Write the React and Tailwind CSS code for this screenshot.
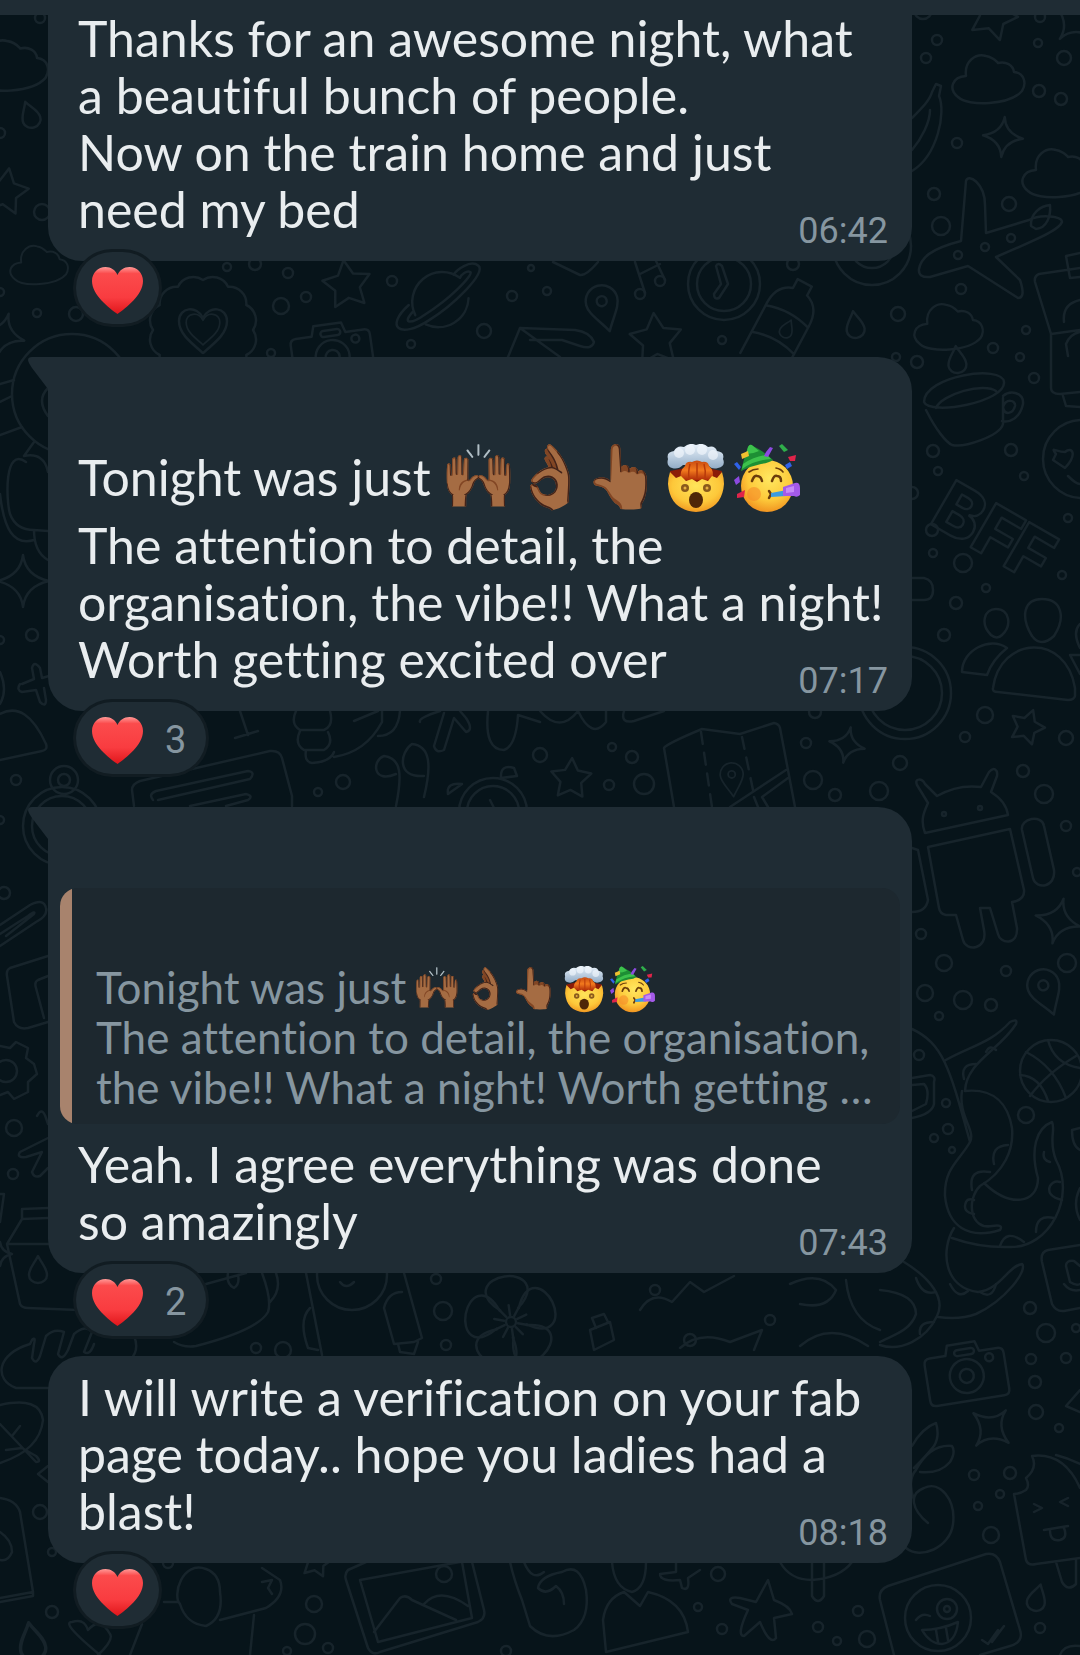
import React from "react";

const TEXT = "font-['Lato',sans-serif] [font-variant-ligatures:none]";
const DIGITS = "font-['Roboto',sans-serif]";

/* ---------- wallpaper ---------- */

const DOTS = [
  [40, 18, 6], [0, 133, 6], [42, 212, 9], [37, 313, 5], [76, 314, 8], [0, 292, 5],
  [227, 267, 5], [255, 264, 7], [288, 273, 6], [281, 306, 9], [306, 297, 6], [392, 281, 6],
  [484, 331, 8], [512, 296, 6], [531, 268, 4], [411, 344, 5], [271, 353, 5], [547, 291, 5],
  [722, 340, 5], [793, 264, 7], [898, 314, 8], [923, 10, 10], [937, 40, 6], [926, 58, 6],
  [1038, 43, 5], [1064, 58, 8], [1039, 91, 7], [1061, 99, 7], [1040, 17, 6], [957, 143, 6],
  [934, 194, 7], [941, 226, 10], [1009, 204, 8], [1011, 238, 5], [985, 247, 5], [958, 255, 5],
  [961, 289, 6], [1026, 330, 5], [896, 357, 5], [917, 362, 7], [993, 348, 6], [1020, 357, 5],
  [1034, 378, 6], [933, 451, 7], [938, 471, 5], [1011, 450, 7], [1024, 476, 5], [932, 530, 7],
  [933, 553, 5], [963, 563, 10], [986, 588, 5], [956, 603, 7], [944, 635, 7], [1068, 518, 5],
  [1062, 575, 5], [912, 493, 7], [985, 715, 9], [965, 737, 6], [1066, 738, 8], [900, 763, 8],
  [1023, 771, 7], [1044, 794, 10], [879, 791, 10], [813, 780, 10], [835, 795, 7], [806, 743, 6],
  [815, 712, 7], [1066, 826, 6], [1077, 872, 5], [921, 934, 6], [944, 963, 9], [1006, 971, 6],
  [1067, 963, 10], [925, 993, 9], [963, 1000, 10], [991, 1005, 7], [939, 1016, 5], [612, 747, 5],
  [632, 757, 7], [644, 784, 11], [609, 785, 6], [540, 755, 8], [16, 780, 6], [0, 820, 5],
  [318, 792, 5], [343, 782, 8], [32, 635, 7], [0, 640, 5], [4, 893, 7], [919, 1055, 6],
  [946, 1103, 5], [948, 1129, 6], [934, 1138, 5], [952, 1150, 4], [1026, 1115, 9], [14, 1128, 9],
  [13, 1174, 6], [436, 1279, 6], [443, 1311, 10], [446, 1345, 6], [256, 1348, 6], [283, 1350, 9],
  [1030, 1308, 7], [1046, 1333, 10], [1076, 1328, 5], [1031, 1359, 6], [1066, 1358, 6],
  [1035, 1382, 7], [1036, 1412, 8], [1059, 1428, 5], [974, 1475, 6], [1010, 1473, 7],
  [1000, 1494, 5], [978, 1506, 5], [991, 1535, 9], [40, 1512, 8], [52, 1552, 5], [52, 1612, 7],
  [1040, 1628, 6], [444, 1574, 9], [314, 1604, 9], [305, 1634, 11], [328, 1648, 6], [718, 1574, 8],
  [698, 1607, 5], [722, 1629, 6], [818, 1627, 6], [858, 1611, 6], [867, 1639, 9], [837, 1641, 5],
  [506, 1651, 6], [168, 1563, 6], [287, 1651, 5], [655, 1290, 6], [690, 1340, 7], [770, 1320, 6],
];

const STARS = [
  [5, 192, 24, 10], [347, 285, 25, -8], [656, 340, 27, -5], [993, 16, 25, 20],
  [571, 779, 21, 3], [1027, 727, 18, 20], [316, 1562, 16, 10],
];

const SPARKLES = [
  [3, 335, 22, 15], [1003, 137, 20, 5], [23, 581, 26, 0], [847, 745, 18, 12],
  [1058, 921, 23, 14], [991, 1428, 23, 40], [1074, 22, 22, 40], [0, 1254, 12, 0],
];

const DROPS = [
  [30, 115, 1, -20], [855, 325, 1, -8], [957, 360, 1, -5], [38, 1270, 1, 0], [1037, 1598, 1, 15],
  [787, 329, 0.7, 25], [32, 1642, 1.4, -10],
];

const PINS = [[603, 306, 1, -15], [1045, 990, 1, -20], [732, 778, 0.72, -5]];

const CLOUDS = [
  [952, 53, 1], [1022, 147, 1], [914, 302, 0.95], [10, 244, 0.8], [-28, 38, 1.05],
];

function starPath(r) {
  const pts = [];
  for (let i = 0; i < 10; i++) {
    const a = (Math.PI / 5) * i - Math.PI / 2;
    const q = i % 2 ? r * 0.52 : r;
    pts.push(`${(q * Math.cos(a)).toFixed(1)},${(q * Math.sin(a)).toFixed(1)}`);
  }
  return `M${pts.join("L")}Z`;
}

function scallopPath(r, n) {
  let d = "";
  for (let i = 0; i <= n; i++) {
    const a = (2 * Math.PI * i) / n;
    const p = `${(r * Math.cos(a)).toFixed(1)} ${(r * Math.sin(a)).toFixed(1)}`;
    d += i ? `A17 17 0 0 1 ${p}` : `M${p}`;
  }
  return d + "Z";
}

const HEART = "M0 24C-14 12-24 4-24-8C-24-22-6-24 0-11C6-24 24-22 24-8C24 4 14 12 0 24Z";

function Camera({ at }) {
  return (
    <g transform={at}>
      <path d="M-34-18L-18-18L-15-28H13L16-18H34Q40-18 40-12V24Q40 30 34 30H-34Q-40 30-40 24V-12Q-40-18-34-18Z" />
      <circle cy="5" r="17" />
      <circle cy="5" r="7" />
      <rect x="-9" y="-22" width="20" height="6" rx="3" />
      <circle cx="25" cy="-10" r="4" />
    </g>
  );
}

function Wallpaper() {
  return (
    <svg
      aria-hidden="true"
      className="absolute inset-0 h-full w-full"
      viewBox="0 0 1080 1655"
      preserveAspectRatio="xMidYMin slice"
      fill="none"
      stroke="#17242b"
      strokeWidth="2.5"
      strokeLinejoin="round"
      strokeLinecap="round"
    >
      {DOTS.map(([x, y, r], i) => <circle key={i} cx={x} cy={y} r={r - 1} />)}
      {STARS.map(([x, y, r, a], i) => <path key={i} d={starPath(r)} transform={`translate(${x} ${y}) rotate(${a})`} />)}
      {SPARKLES.map(([x, y, r, a], i) => (
        <path key={i} d="M0-10Q1-2 10 0Q1 2 0 10Q-1 2-10 0Q-1-2 0-10Z" strokeWidth={25 / r} transform={`translate(${x} ${y}) rotate(${a}) scale(${r / 10})`} />
      ))}
      {DROPS.map(([x, y, s, a], i) => (
        <path key={i} d="M0-14C4-6 9-2 9 5A9 8 0 0 1-9 5C-9-2-4-6 0-14Z" transform={`translate(${x} ${y}) rotate(${a}) scale(${s})`} />
      ))}
      {PINS.map(([x, y, s, a], i) => (
        <g key={i} transform={`translate(${x} ${y}) rotate(${a}) scale(${s})`}>
          <path d="M0 26C-8 12-16 4-16-5A16 16 0 0 1 16-5C16 4 8 12 0 26Z" />
          <circle cy="-5" r="5" />
        </g>
      ))}
      {CLOUDS.map(([x, y, s], i) => (
        <path key={i} d="M14 23C12 8 24 0 34 3C41 4 44 8 46 10C54 8 61 12 62 19C72 20 75 30 70 38C58 52 16 54 6 44C-4 36 0 24 14 23Z" transform={`translate(${x} ${y}) scale(${s})`} />
      ))}

      {/* pepper, aeroplane, gift box */}
      <path d="M912 118C922 108 930 100 932 92L936 84L941 86L939 96C946 112 938 155 912 171M912 150C922 138 930 122 930 110" />
      <path d="M966 181C968 173 985 183 985 205L986 233L1029 220C1040 214 1062 216 1062 222C1060 228 1050 234 996 257L1020 280Q1026 298 1018 298L968 266L930 277Q918 278 919 269C921 258 930 249 961 241Z" />
      <path d="M1031 226C1030 214 1040 206 1050 205C1051 216 1047 228 1036 229Z" />
      <path d="M1080 268L1039 274Q1034 276 1035 282L1051 334V388Q1051 394 1060 394L1080 392M1080 253L1066 256L1070 278L1080 277M1051 334L1080 330M1064 322Q1062 304 1080 300M1068 356L1066 344Q1070 334 1080 332M1063 396L1066 406L1080 407" />

      {/* badge, planet, camera, envelope */}
      <path d={scallopPath(50, 12)} transform="translate(203 330)" />
      <path d={HEART} transform="translate(203 329)" />
      <path d={HEART} transform="translate(203 328) scale(.7)" />
      <g transform="translate(439 298) rotate(-28)">
        <path d="M-29 4A30 30 0 0 1 28-8M-24 17A30 30 0 0 0 26 14" />
        <path d="M-30-8C-62 0-54 18-20 15C10 13 54 0 50-10C46-20 28-16 24-14" />
        <path d="M-30 0C-46 6-36 10-20 8C10 6 40-4 40-8C38-12 30-10 28-8" />
      </g>
      <Camera at="translate(332 352) rotate(-8)" />
      <path d="M508 357L520 328L575 330Q590 332 594 342Q592 350 580 346L562 340H530M520 328L560 357M553 262L580 275Q586 276 598 262" />

      {/* notes, clocks, bottle, target */}
      <circle cx="640" cy="294" r="5" /><circle cx="660" cy="281" r="5" />
      <path d="M645 293L635 262M665 280L656 261M640 274L660 264" />
      <circle cx="724" cy="284" r="36" /><circle cx="724" cy="284" r="27" />
      <path d="M716 266Q718 262 722 266L728 284L719 298Q714 300 714 294L721 284Z" />
      <g transform="translate(785 320) rotate(28)">
        <path d="M-8-42V-32C-20-28-24-18-24-6V50M8-42V-32C20-28 24-18 24-6V50M-8-42H8M-24-4Q0-12 24-4M-24 26Q0 18 24 26" />
      </g>
      <circle cx="872" cy="246" r="39" /><circle cx="872" cy="246" r="22" />

      {/* cup and smiling face */}
      <path d="M924 402C924 376 1002 364 1004 382C1006 402 930 416 924 402ZM926 410C936 430 946 442 952 445C964 448 1000 436 1003 424L1003 398M936 408C942 394 984 382 996 391M1003 396C1010 390 1024 392 1023 404C1020 418 1010 423 1002 421M1003 407C1006 398 1016 400 1015 406C1013 414 1004 416 1003 407Z" />
      <circle cx="1082" cy="459" r="39" />
      <path d="M1056 454C1050 446 1056 452 1065 452C1072 446 1078 454 1065 468L1053 460ZM1068 476Q1076 484 1080 484" />
      <g transform="translate(934 503) rotate(30)" className="font-['Inter',sans-serif]" fontSize="70" fontWeight="800">
        <text x="4" y="20">B</text><text x="50" y="20">F</text><text x="88" y="20">F</text>
      </g>
      <path d="M912 578H924Q933 580 933 590Q933 600 924 600H912" />

      {/* people and ring */}
      <path d="M996 609C1010 609 1012 626 1002 635Q997 640 991 635C980 624 984 609 996 609ZM1042 599C1062 599 1066 618 1054 636Q1041 648 1032 636C1020 616 1024 599 1042 599ZM1007 648C990 636 962 650 962 672L987 675Q992 660 1007 648ZM993 688C1000 636 1066 632 1075 688V696Q1074 700 1068 700L998 692Q992 692 993 688ZM1080 624Q1072 632 1080 648M1080 655H1070L1080 674" />
      <circle cx="905" cy="693" r="46" /><circle cx="905" cy="693" r="37" />

      {/* android */}
      <path d="M925 833C920 820 924 812 928 803L917 785C914 778 922 778 925 784L937 796Q958 784 981 787L989 772C994 766 998 770 997 776L991 792C1004 800 1007 808 1008 815ZM928 847L1010 829L1024 890Q1025 900 1012 902L1017 928C1018 946 1000 944 998 934L990 908L980 908L984 930C988 950 966 952 963 940L956 915H946Q940 914 939 908ZM1022 830C1020 818 1042 814 1044 826L1054 870C1056 888 1036 890 1033 878ZM912 848L918 850L928 900Q926 912 912 912" />
      <circle cx="944" cy="814" r="2" /><circle cx="980" cy="808" r="2" />

      {/* map */}
      <path d="M674 807L664 748Q666 744 702 729L740 734L774 723Q779 724 780 728L795 807M786 770L730 807M788 778L762 797L768 807M754 797L758 807" />
      <path d="M701 732L712 807M742 737L753 790" strokeDasharray="12 9" />
      <path d="M540 711Q560 734 578 711M578 711Q592 740 606 722V711M624 711Q620 724 634 721L664 711" />

      {/* astronaut */}
      <circle cx="72" cy="394" r="60" />
      <path d="M48 388Q36 400 48 416M26 462C4 446 6 500 10 514Q16 530 34 530L48 531M34 442L24 456Q44 452 48 472M0 494C4 530 14 546 34 540M34 530Q34 552 48 560M0 384L14 380M0 435L22 427M0 402L12 396" />
      {/* plus, fan, stopwatch, card */}
      <path d="M20 684Q16 690 22 692L36 690L40 702Q46 708 46 700L44 688M22 684L34 679L32 668Q34 660 40 668L42 678L49 676M0 714Q26 700 46 744Q48 750 42 751L0 760M0 672Q8 690 0 704" />
      <circle cx="64" cy="780" r="14" /><circle cx="64" cy="780" r="6" />
      <circle cx="62" cy="826" r="39" /><circle cx="62" cy="826" r="30" />
      <path d="M134 806L132 790Q132 784 140 781L270 751Q280 750 282 758L292 796V806M153 800Q148 794 156 791L248 771Q256 772 250 779L158 800M190 806L246 794Q254 796 248 800L226 806" />
      <path d="M240 711L248 735M235 738L258 731M296 711Q290 724 300 730H324Q334 726 330 711M300 731Q294 744 304 750H324Q334 744 328 732M306 750Q304 762 312 763Q330 762 334 752M334 757Q366 752 382 722V711M354 721L378 711M378 736Q398 736 400 711" />
      <path d="M420 722Q418 718 440 711M444 713L434 746Q436 754 444 750L454 718L466 732Q474 730 466 718L460 711M488 711Q484 750 504 750Q516 746 518 715L540 722M396 774C372 784 372 760 384 756C402 758 402 776 396 806M424 776C396 778 400 752 412 744C430 746 432 764 424 797" />
      <circle cx="493" cy="812" r="34" /><circle cx="493" cy="812" r="26" />
      <path d="M448 794Q446 782 462 784ZM501 778Q500 764 514 768L517 776ZM490 800L496 812" />
      <path d="M0 925L30 905Q44 898 46 908Q48 916 36 922L0 946M0 934L28 916Q36 910 34 914L6 936M48 956L10 968Q6 970 7 976L14 1022Q18 1030 28 1028L48 1022M48 976L38 980Q34 982 36 988L44 1018" />

      {/* octopus, card, basketball */}
      <path d="M912 1029C944 1044 950 1070 970 1142C960 1160 944 1168 945 1196C948 1226 968 1240 1000 1230Q1004 1224 992 1226C970 1230 966 1200 980 1186C1004 1172 1014 1150 1012 1128C1008 1104 994 1088 965 1091C966 1062 1000 1050 1016 1024Q1018 1018 1010 1022C990 1044 970 1046 944 1061M970 1142C976 1130 958 1116 962 1091M984 1183C1010 1208 1038 1204 1038 1178C1030 1150 1036 1128 1052 1122C1056 1130 1048 1140 1056 1160C1076 1196 1050 1248 1010 1247Q980 1248 952 1238M954 1228C940 1250 944 1288 978 1292C1000 1290 1008 1266 1022 1264C1028 1270 1006 1300 976 1314Q960 1320 938 1317M904 1262C930 1278 946 1298 937 1316C926 1340 900 1352 880 1345M880 1290C900 1292 916 1298 916 1314C910 1332 890 1336 880 1342" />
      <path d="M964 1079Q960 1064 976 1064M986 1052Q990 1044 996 1050M994 1164Q990 1146 1008 1145M972 1190Q968 1168 990 1172M974 1214Q962 1212 966 1202Q968 1198 974 1200M1000 1246Q1006 1228 1024 1242M1036 1232Q1036 1214 1054 1218M1062 1200Q1046 1196 1050 1186Q1054 1180 1060 1182M1050 1162Q1042 1160 1044 1152M950 1284Q958 1300 968 1291M980 1292Q992 1300 996 1284M916 1278Q922 1296 936 1292M920 1334Q918 1322 934 1322M912 1078L930 1075Q936 1076 934 1082L934 1104Q932 1114 912 1118M912 1085L924 1084Q930 1090 926 1104L912 1111" />
      <circle cx="1051" cy="1071" r="31" />
      <path d="M1030 1096Q1046 1074 1076 1056M1026 1052Q1054 1066 1066 1098M1048 1040Q1054 1064 1080 1068M1020 1075Q1040 1076 1048 1101M1080 1128L1072 1130Q1072 1146 1080 1150M1080 1188Q1072 1204 1080 1220M1080 1245L1048 1250Q1040 1252 1042 1262L1052 1304Q1056 1312 1064 1311L1080 1308M1066 1266Q1066 1260 1074 1261L1080 1266M1066 1266L1070 1282Q1076 1286 1080 1284M1064 1284Q1070 1292 1080 1290" />
      <Camera at="translate(966 1371) rotate(-9)" />

      {/* gear, carton, bread, leaf, bag */}
      <path d="M0 1046L10 1048L16 1042L28 1048L26 1058L34 1064L37 1074L28 1082L28 1092L14 1099L8 1092L0 1095" /><circle cx="6" cy="1071" r="11" />
      <path d="M37 1116Q42 1106 46 1118L48 1124M48 1138L20 1152Q16 1158 26 1157L42 1152L32 1172Q34 1178 40 1176L48 1168M0 1194H4L0 1222M48 1208L22 1209V1219L7 1244L20 1304Q22 1308 28 1308L78 1310M22 1219L48 1218M7 1244H48" />
      <path d="M48 1388H16C-6 1380-4 1354 30 1344L32 1340Q36 1336 34 1344L32 1358Q36 1366 40 1356L46 1336Q54 1328 64 1332L58 1354Q62 1362 68 1350L74 1334Q86 1324 92 1332L84 1352Q90 1356 94 1344M134 1336Q140 1350 130 1360M0 1405Q40 1396 43 1420Q40 1450 0 1463M0 1424L36 1462Q42 1462 36 1456L22 1448M20 1426L12 1436M22 1448L6 1450M48 1466L38 1474L48 1482M0 1498Q16 1500 20 1512L33 1592L0 1598M33 1592V1596L0 1602M0 1532Q12 1540 12 1552Q8 1562 0 1560" />
      {/* paint tube, brushes, flower, fish */}
      <path d="M206 1284L246 1273M228 1273Q226 1284 234 1288Q240 1284 238 1275M262 1273Q272 1300 268 1312Q258 1330 196 1346Q184 1348 174 1342M276 1273Q282 1290 270 1302M306 1273L322 1355M310 1308Q298 1320 308 1348L318 1350" />
      <circle cx="352" cy="1275" r="35" /><path d="M340 1282Q346 1290 354 1282M404 1273L422 1338L414 1342L394 1344L384 1308Q388 1292 402 1292M398 1344L400 1352L414 1354L418 1342" />
      <g transform="translate(511 1322) rotate(-8)">
        {[0, 72, 144, 216, 288].map((a) => <path key={a} d="M-9-13C-32-32-18-46 0-46C18-46 32-32 9-13" transform={`rotate(${a})`} />)}
        <circle r="5" />
        {[0, 36, 72, 108, 144, 180, 216, 252, 288, 324].map((a) => <path key={a} d="M0-7V-17" transform={`rotate(${a})`} />)}
      </g>
      <path d="M590 1330L610 1322L614 1340L594 1350ZM596 1328L592 1318L604 1314L608 1322M640 1310Q652 1290 672 1302L690 1282L704 1292L734 1276M680 1348Q700 1330 730 1342L762 1330L754 1350M790 1284Q820 1270 836 1290Q828 1310 800 1304M846 1280Q850 1320 880 1330M800 1346Q830 1320 868 1346" />
      {/* apple and ice cream */}
      <path d="M912 1446Q922 1428 936 1423Q940 1436 934 1446Q926 1456 914 1468M916 1470Q930 1444 952 1446Q956 1452 950 1462Q940 1474 920 1472M914 1500C908 1484 912 1474 916 1470M928 1523C912 1510 908 1494 924 1488C940 1480 956 1500 953 1524C950 1548 920 1560 906 1548" />
      <path d="M1080 1488Q1064 1452 1032 1456Q1038 1468 1026 1478Q1030 1486 1026 1490Q1020 1494 1014 1494L1026 1560Q1028 1566 1036 1564L1080 1558M1056 1455Q1068 1458 1080 1464M1034 1504L1042 1508L1034 1512M1068 1498L1060 1502L1068 1506M1044 1530L1068 1526M1050 1530Q1050 1542 1060 1540Q1068 1538 1064 1528M1056 1562L1062 1582Q1068 1592 1076 1584V1560M1080 1390L1066 1406L1080 1412" />

      {/* bear, photo, mitten, tulip, starfish, lollipop, winking card */}
      <path d="M100 1655Q60 1622 72 1622Q84 1618 88 1630Q100 1616 110 1634Q114 1640 98 1655M130 1655L142 1624M164 1602H178M206 1569C182 1560 172 1596 180 1604Q186 1624 206 1626Q224 1618 220 1592Q220 1574 206 1569ZM220 1620L266 1608Q286 1596 280 1580L262 1568M254 1615L250 1655M262 1582L272 1580L268 1588L272 1594" />
      <path d="M366 1562L348 1570Q344 1574 346 1580L368 1648Q372 1656 380 1652L478 1622Q486 1618 484 1610L472 1562M360 1580L460 1562M360 1580L378 1642L472 1618L462 1562M374 1632L400 1598Q406 1594 412 1600L456 1620M424 1604Q440 1586 468 1606" />
      <path d="M510 1562Q514 1580 522 1600L530 1626Q548 1644 574 1630Q590 1618 586 1590Q580 1562 562 1572Q540 1576 538 1588Q546 1596 556 1586Q564 1592 564 1604M524 1562Q532 1582 544 1572M606 1652L603 1620Q606 1598 624 1592L640 1606L648 1592Q684 1600 688 1632ZM612 1562Q614 1588 632 1592Q646 1588 646 1562M660 1574L676 1572V1562M660 1574Q660 1582 680 1580L682 1588Q690 1592 688 1578L700 1570" />
      <path d="M768 1580L774 1600Q790 1606 792 1614L774 1618L776 1638Q770 1646 760 1622L744 1636Q736 1636 748 1610L732 1604Q726 1596 740 1598L756 1602Z" />
      <path d="M780 1562Q790 1580 812 1580Q840 1578 852 1562M812 1562V1596Q818 1606 824 1596V1562" />
      <path d="M894 1655L880 1600Q878 1590 888 1586L986 1554Q996 1552 1000 1562L1020 1630Q1024 1642 1010 1646L980 1655" />
      <circle cx="938" cy="1618" r="33" /><circle cx="947" cy="1609" r="10" /><circle cx="947" cy="1609" r="3" />
      <path d="M916 1620Q922 1612 930 1616M922 1630Q940 1630 958 1622Q956 1642 942 1644Q930 1644 922 1630ZM936 1630L938 1642M946 1628L948 1640M982 1640L988 1644L998 1630M992 1642L1004 1626M1060 1655Q1064 1644 1080 1646" />
    </svg>
  );
}

/* ---------- emoji ---------- */

function HeartIcon() {
  return (
    <svg role="img" aria-label="red heart" viewBox="0 0 51 47" className="h-[47px] w-[51px] shrink-0">
      <defs>
        <linearGradient id="heart-body" x1="0" y1="0" x2="0" y2="1">
          <stop offset="0" stopColor="#ff9a98" />
          <stop offset=".14" stopColor="#fb4b4c" />
          <stop offset=".65" stopColor="#f93c40" />
          <stop offset="1" stopColor="#e0161b" />
        </linearGradient>
      </defs>
      <path fill="url(#heart-body)" d="M25.500 47C17 41 0 28 0 14C0 6 6 0 13.500 0C19 0 23.500 3 25.500 8C27.500 3 32 0 37.500 0C45 0 51 6 51 14C51 28 34 41 25.500 47Z" />
    </svg>
  );
}

function ExplodingHead({ size }) {
  return (
    <svg role="img" aria-label="exploding head" viewBox="0 0 72 72" className={size}>
      <defs>
        <radialGradient id="boom-face" cx=".5" cy=".35" r=".7">
          <stop offset="0" stopColor="#ffe45a" /><stop offset=".6" stopColor="#fdc83a" /><stop offset="1" stopColor="#ee8e1c" />
        </radialGradient>
        <linearGradient id="boom-smoke" x1="0" y1="0" x2="0" y2="1">
          <stop offset="0" stopColor="#eaf3fb" /><stop offset="1" stopColor="#92acc6" />
        </linearGradient>
        <linearGradient id="boom-fire" x1="0" y1="0" x2="0" y2="1">
          <stop offset="0" stopColor="#c84a10" /><stop offset=".5" stopColor="#f27a1e" /><stop offset="1" stopColor="#b02c08" />
        </linearGradient>
      </defs>
      <path fill="#8c1c08" d="M11 27Q37 20 63 27L60 40H14Z" />
      <path fill="url(#boom-smoke)" d="M13 24Q7 22 9 15Q7 8 15 7Q18 1 25 3Q31-2 37 1Q44-2 49 3Q56 1 58 7Q66 8 64 15Q67 22 59 24Q53 26 49 21H24Q19 26 13 24Z" />
      <g fill="#f3f8fd" opacity=".65"><circle cx="20" cy="9" r="5" /><circle cx="31" cy="6" r="5" /><circle cx="43" cy="6" r="5" /><circle cx="54" cy="11" r="5" /></g>
      <path fill="url(#boom-fire)" d="M22 36Q20 27 26 22Q27 17 33 18Q38 15 43 18Q49 17 50 22Q56 27 53 36Z" />
      <path stroke="#b83a0a" strokeWidth="1.500" fill="none" d="M31 20Q29 28 30 34M38 19V34M45 20Q47 27 46 34" />
      <path fill="url(#boom-face)" d="M11 28L17 34L22 32L27 37L33 35L38 38L43 35L49 37L53 32L58 34L63 28Q65 34 65 40Q63 66 37 68Q11 66 9 40Q9 34 11 28Z" />
      <circle cx="26" cy="44" r="4" fill="#8a5a1c" /><circle cx="26" cy="44" r="1.500" fill="#e8b040" />
      <circle cx="48" cy="44" r="4" fill="#8a5a1c" /><circle cx="48" cy="44" r="1.500" fill="#e8b040" />
      <ellipse cx="37" cy="56" rx="7" ry="8" fill="#4e2608" />
    </svg>
  );
}

function PartyFace({ size }) {
  return (
    <svg role="img" aria-label="partying face" viewBox="0 0 72 72" className={size}>
      <defs>
        <radialGradient id="party-face" cx=".55" cy=".35" r=".7">
          <stop offset="0" stopColor="#ffe860" /><stop offset=".6" stopColor="#fdc93a" /><stop offset="1" stopColor="#ee8a1c" />
        </radialGradient>
      </defs>
      <circle cx="36" cy="42" r="26" fill="url(#party-face)" />
      <circle cx="23" cy="50" r="7" fill="#f58a2a" opacity=".6" />
      <path fill="#1d8f34" d="M10 27Q13 14 17 3Q19-1 22 2Q34 8 42 16Q38 19 30 20Q20 22 10 27Z" />
      <path fill="#3dc24c" d="M17 3Q19-1 22 2L28 7Q22 10 15 10ZM12 20Q24 12 36 11L40 15Q24 16 11 25Z" />
      <g fill="none" stroke="#6b3d0c" strokeLinecap="round" strokeWidth="2.500">
        <path d="M21 37Q23 31 26 32Q30 32 31 37M41 37Q43 31 46 32Q50 32 50 37" />
        <path strokeWidth="1.600" d="M18 28Q22 25 27 25M45 24Q50 25 52 28" />
        <path d="M38 47L40 50L38 54" />
      </g>
      <path fill="#3b9be0" d="M40 49L56 46V52L40 53Z" />
      <path fill="#a45ae8" d="M52 43L64 39Q69 38 69 44V51Q66 54 63 52L52 52Z" />
      <path fill="#c78bf7" d="M55 44L63 42V48L55 49Z" />
      <path fill="#f0c030" d="M10 10L17 7L18 12L11 15Z" />
      <g fill="#2f62e8"><path d="M3 20L6 18L10 23L8 26ZM54 21L59 18L61 22L56 25Z" /></g>
      <path fill="#8c4ae0" d="M35 8L39 3L42 4L37 13L33 12ZM3 36L8 32L9 38L5 41Z" />
      <path fill="#2fae4a" d="M48 2L51 0L57 6L53 8Z" />
      <path fill="#e0244a" d="M57 13L65 11L64 17L59 17ZM6 50L14 46L13 53L6 54Z" />
    </svg>
  );
}

function EmojiRow({ large }) {
  const cell = large
    ? "flex h-[72px] w-[72px] justify-center text-[62px] leading-[66px]"
    : "flex h-[49px] w-[49px] justify-center text-[40px] leading-[46px]";
  const face = large ? "h-[72px] w-[72px]" : "h-[49px] w-[49px]";
  return (
    <span className="flex shrink-0 font-['Noto_Color_Emoji',sans-serif]">
      {["🙌🏾", "👌🏾", "👆🏾"].map((e) => <span key={e} className={cell}>{e}</span>)}
      <ExplodingHead size={face} />
      <PartyFace size={face} />
    </span>
  );
}

/* ---------- chat ---------- */

function Tail() {
  return (
    <svg aria-hidden="true" viewBox="0 0 56 34" className="absolute top-0 -left-[22px] h-[34px] w-[56px]">
      <path fill="#1f2c34" d="M56 0V34H22V32L6 11Q2 5 2 3Q2 0 6 0Z" />
    </svg>
  );
}

function Message({ shape, tail, header, lines, time, count }) {
  const last = lines[lines.length - 1];
  return (
    <article className="flex flex-col items-start">
      <div className={`relative w-full bg-[#1f2c34] pr-6 pb-3 pl-[30px] text-[50px] leading-[57px] whitespace-nowrap text-[#e9edef] ${TEXT} ${shape}`}>
        {tail && <Tail />}
        {header}
        {lines.slice(0, -1).map((l, i) => <p key={i}>{l}</p>)}
        <div className="flex items-start justify-between">
          <p>{last}</p>
          <time className={`mt-8 text-[36px] leading-9 text-[#8696a0] ${DIGITS}`}>{time}</time>
        </div>
      </div>
      <button
        type="button"
        aria-label={`Reactions: ${count || 1}`}
        className="relative -mt-[9px] ml-7 flex h-[72px] items-center gap-[22px] rounded-full bg-[#1f2c34] px-4 pt-1 ring-[3px] ring-[#111c22]"
      >
        <HeartIcon />
        {count && <span className={`mr-1 text-[38px] leading-10 text-[#8696a0] ${DIGITS}`}>{count}</span>}
      </button>
    </article>
  );
}

function Quote() {
  return (
    <blockquote className={`mb-3 -ml-[18px] -mr-3 overflow-hidden rounded-[18px] bg-[#1d282f] ${TEXT}`}>
      <div className="border-l-[12px] border-[#a8836d] pt-[74px] pb-3 pl-6 text-[44px] leading-[50px] text-[#8696a0]">
        <p className="flex h-[50px] items-start gap-[6px]">
          Tonight was just
          <span className="mt-1"><EmojiRow /></span>
        </p>
        <p>The attention to detail, the organisation,</p>
        <p>the vibe!! What a night! Worth getting …</p>
      </div>
    </blockquote>
  );
}

export default function App() {
  return (
    <main className="relative min-h-screen overflow-hidden bg-[#07141a]">
      <Wallpaper />
      <header className="absolute inset-x-0 top-0 h-[15px] bg-[#1f2c34]" />
      <section className="relative flex flex-col pr-[168px] pb-6 pl-12">
        <Message
          shape="rounded-b-[34px] pt-[10px]"
          lines={["Thanks for an awesome night, what", "a beautiful bunch of people.", "Now on the train home and just", "need my bed"]}
          time="06:42"
        />
        <div className="mt-[33px]">
          <Message
            tail
            shape="rounded-r-[34px] rounded-bl-[34px] pt-[92px]"
            header={
              <p className="flex h-[68px] items-start gap-3">
                Tonight was just
                <span className="-mt-[5px]"><EmojiRow large /></span>
              </p>
            }
            lines={["The attention to detail, the", "organisation, the vibe!! What a night!", "Worth getting excited over"]}
            time="07:17"
            count={3}
          />
        </div>
        <div className="mt-[33px]">
          <Message
            tail
            shape="rounded-r-[34px] rounded-bl-[34px] pt-[81px]"
            header={<Quote />}
            lines={["Yeah. I agree everything was done", "so amazingly"]}
            time="07:43"
            count={2}
          />
        </div>
        <div className="mt-5">
          <Message
            shape="rounded-[34px] pt-[13px]"
            lines={["I will write a verification on your fab", "page today.. hope you ladies had a", "blast!"]}
            time="08:18"
          />
        </div>
      </section>
    </main>
  );
}
